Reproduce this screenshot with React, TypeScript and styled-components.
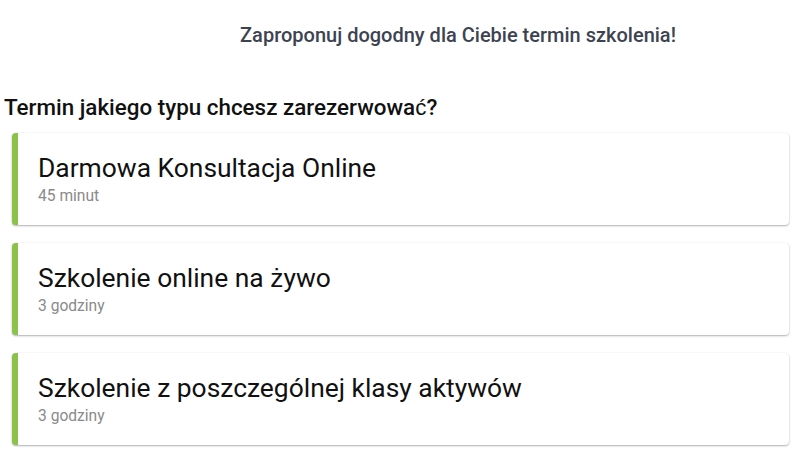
import React, { ReactElement } from 'react';
import styled, { createGlobalStyle } from 'styled-components';

const GlobalStyle = createGlobalStyle`
  html, body {
    margin: 0;
    padding: 0;
    background: #ffffff;
  }
  body {
    font-family: Roboto, "Liberation Sans", sans-serif;
  }
`;

const Page = styled.div`
  width: 806px;
  height: 469px;
  overflow: hidden;
  display: flex;
  flex-direction: column;
`;

const Heading = styled.h1`
  margin: 21px 0 0 110px;
  font-size: 20px;
  line-height: 28px;
  font-weight: 500;
  color: #3d4351;
  text-align: center;
`;

const Question = styled.h2`
  margin: 44px 0 0 4px;
  font-size: 22.4px;
  line-height: 28px;
  font-weight: 500;
  color: #111111;
`;

const Fallback = styled.span`
  font-family: "Liberation Sans", Arial, sans-serif;
  font-weight: 400;
`;

const List = styled.div`
  display: flex;
  flex-direction: column;
  gap: 18px;
  margin: 11px 17px 0 12px;
`;

const Card = styled.div`
  height: 92px;
  box-sizing: border-box;
  padding: 19px 20px 0 20px;
  border-left: 6px solid #8bc34a;
  border-radius: 4px;
  background: #ffffff;
  box-shadow: 0 1px 2px rgba(0, 0, 0, 0.3), 0 0 2px rgba(0, 0, 0, 0.06);
  cursor: pointer;
`;

const Title = styled.div`
  font-size: 26.4px;
  line-height: 32px;
  color: #111111;
`;

const Duration = styled.div`
  margin-top: 3px;
  font-size: 15.6px;
  line-height: 18px;
  color: #8a8a8a;
`;

interface Option {
  title: React.ReactNode;
  duration: string;
}

const options: Option[] = [
  { title: 'Darmowa Konsultacja Online', duration: '45 minut' },
  { title: <>Szkolenie online na <Fallback>ż</Fallback>ywo</>, duration: '3 godziny' },
  { title: 'Szkolenie z poszczególnej klasy aktywów', duration: '3 godziny' },
];

const App = (): ReactElement => {
  return (
    <Page>
      <GlobalStyle />
      <Heading>Zaproponuj dogodny dla Ciebie termin szkolenia!</Heading>
      <Question>Termin jakiego typu chcesz zarezerwowa<Fallback>ć</Fallback>?</Question>
      <List>
        {options.map((option, i) => (
          <Card key={i}>
            <Title>{option.title}</Title>
            <Duration>{option.duration}</Duration>
          </Card>
        ))}
      </List>
    </Page>
  );
};

export default App;
